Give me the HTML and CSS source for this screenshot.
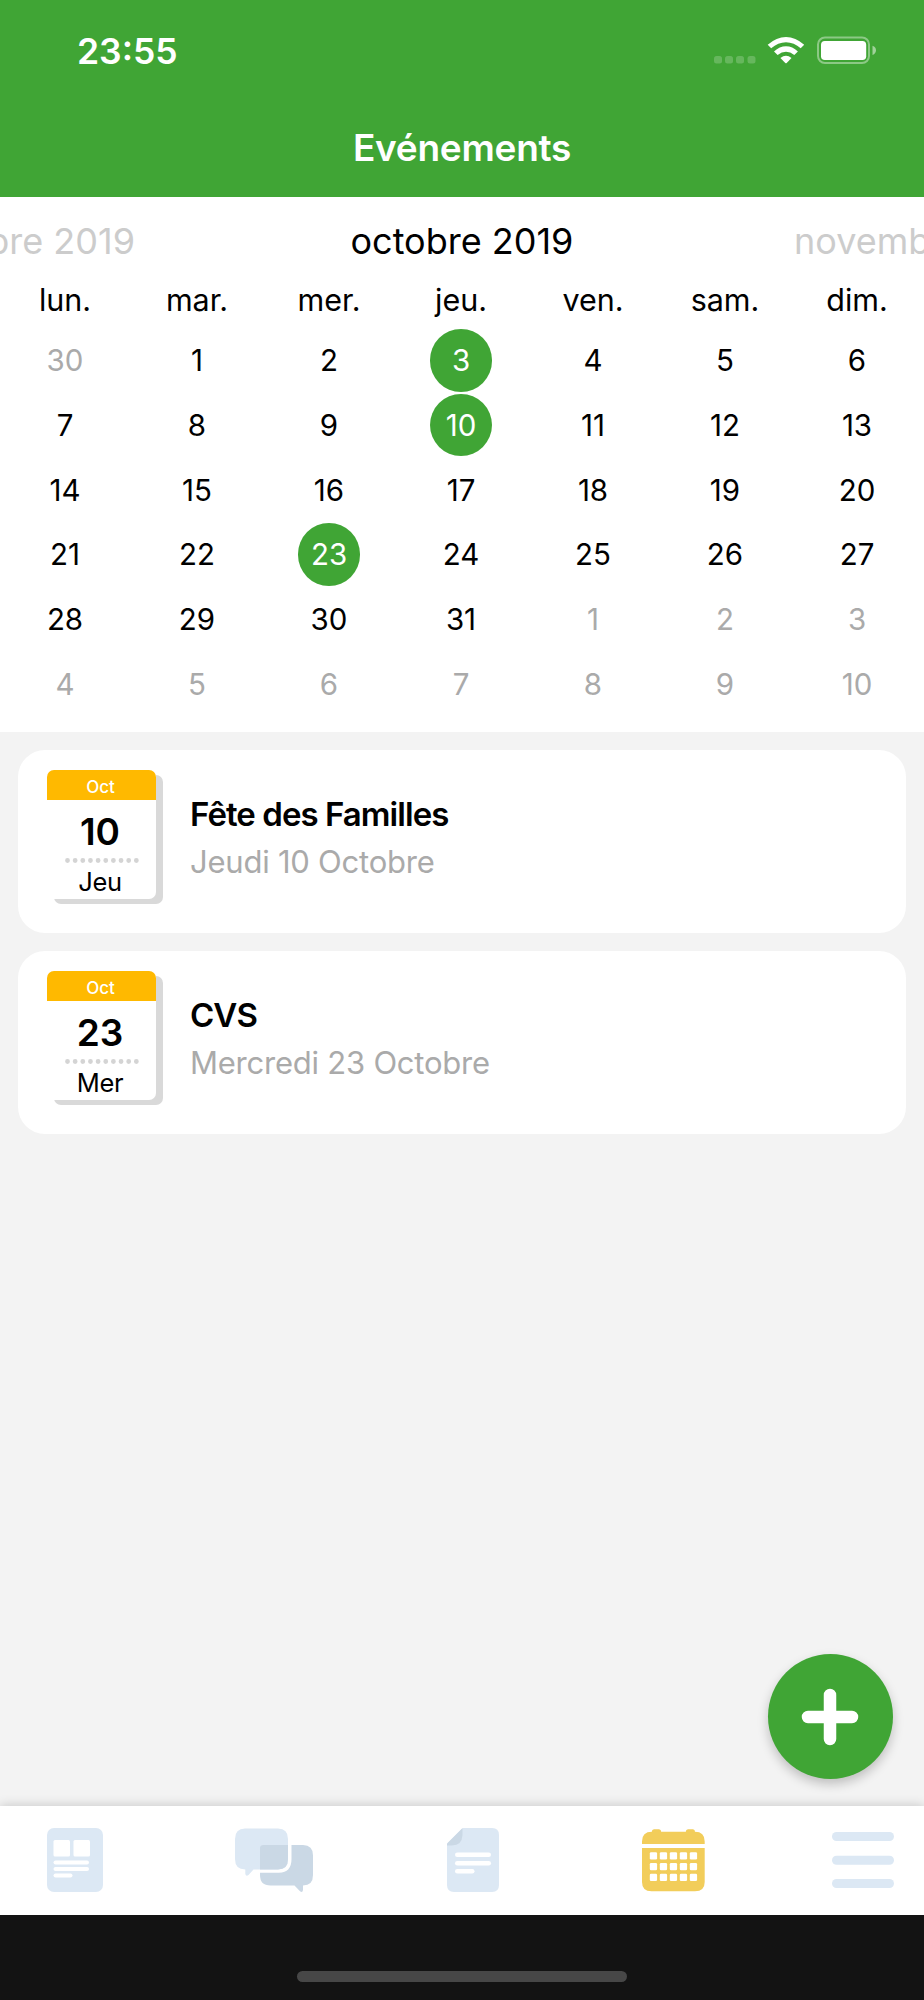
FILE: index.html
```html
<!DOCTYPE html>
<html lang="fr">
<head>
<meta charset="utf-8">
<title>Evénements</title>
<link rel="stylesheet" href="styles.css">
</head>
<body>
<div class="app">
  <header class="header">
    <div class="status">
      <span class="clock">23:55</span>
      <svg class="status-icons" width="164" height="28" viewBox="714 36 164 28">
        <g fill="#fff" fill-opacity=".2">
          <rect x="714" y="56" width="8" height="7.500" rx="2.500"/><rect x="725" y="56" width="8" height="7.500" rx="2.500"/><rect x="736" y="56" width="8" height="7.500" rx="2.500"/><rect x="747.500" y="56" width="8" height="7.500" rx="2.500"/>
        </g>
        <g fill="#fff">
          <path d="M767.700 44.700Q776.500 36.900 786 36.900T804.200 44.700L800.700 48.300Q794 42.300 786 42.300T771.200 48.300Z"/>
          <path d="M774 51.400Q779.600 46.200 786 46.200T797.900 51.400L794.300 55Q790.300 51.700 786 51.700T777.600 55Z"/>
          <path d="M780.400 58.100Q786 53.300 791.500 58.100L786.700 62.900Q786 63.500 785.300 62.900Z"/>
          <rect x="821" y="41" width="45.200" height="19" rx="3.800"/>
        </g>
        <rect x="818" y="37.500" width="51" height="25.500" rx="7" fill="none" stroke="#fff" stroke-opacity=".4" stroke-width="2"/>
        <path d="M872.500 45.700Q876 47 876 50.300T872.500 55Z" fill="#fff" fill-opacity=".5"/>
      </svg>
    </div>
    <h1 class="title">Evénements</h1>
  </header>

  <section class="calendar">
    <div class="months">
      <div class="month month-prev"><span>septembre 2019</span></div>
      <div class="month month-current"><span>octobre 2019</span></div>
      <div class="month month-next"><span>novembre 2019</span></div>
    </div>
    <div class="weekdays">
      <span>lun.</span><span>mar.</span><span>mer.</span><span>jeu.</span><span>ven.</span><span>sam.</span><span>dim.</span>
    </div>
    <div class="days">
      <span class="out">30</span><span>1</span><span>2</span><span class="event">3</span><span>4</span><span>5</span><span>6</span>
      <span>7</span><span>8</span><span>9</span><span class="event">10</span><span>11</span><span>12</span><span>13</span>
      <span>14</span><span>15</span><span>16</span><span>17</span><span>18</span><span>19</span><span>20</span>
      <span>21</span><span>22</span><span class="event">23</span><span>24</span><span>25</span><span>26</span><span>27</span>
      <span>28</span><span>29</span><span>30</span><span>31</span><span class="out">1</span><span class="out">2</span><span class="out">3</span>
      <span class="out">4</span><span class="out">5</span><span class="out">6</span><span class="out">7</span><span class="out">8</span><span class="out">9</span><span class="out">10</span>
    </div>
  </section>

  <main class="events">
    <article class="card">
      <div class="date">
        <div class="date-month">Oct</div>
        <div class="date-day">10</div>
        <svg class="dots" width="75" height="5"><line x1="2.500" y1="2.500" x2="72" y2="2.500"/></svg>
        <div class="date-name">Jeu</div>
      </div>
      <div class="info">
        <h2 class="name">Fête des Familles</h2>
        <p class="when">Jeudi 10 Octobre</p>
      </div>
    </article>
    <article class="card">
      <div class="date">
        <div class="date-month">Oct</div>
        <div class="date-day">23</div>
        <svg class="dots" width="75" height="5"><line x1="2.500" y1="2.500" x2="72" y2="2.500"/></svg>
        <div class="date-name">Mer</div>
      </div>
      <div class="info">
        <h2 class="name">CVS</h2>
        <p class="when">Mercredi 23 Octobre</p>
      </div>
    </article>
    <button class="add" aria-label="Ajouter">
      <svg width="58" height="58" viewBox="0 0 58 58"><path d="M29 7V51M7 29H51"/></svg>
    </button>
  </main>

  <nav class="tabs">
    <svg class="tab-news" width="56" height="64" viewBox="0 0 56 64">
      <rect width="56" height="64" rx="7" fill="#dce8f4"/>
      <g fill="#fff"><rect x="6.500" y="12" width="16.500" height="16.500" rx="1.500"/><rect x="26.500" y="12" width="16.500" height="16.500" rx="1.500"/><rect x="6.500" y="32.500" width="35.500" height="4" rx="2"/><rect x="6.500" y="39" width="35.500" height="4" rx="2"/><rect x="6.500" y="45.500" width="19" height="4" rx="2"/></g>
    </svg>
    <svg class="tab-chat" width="78" height="64" viewBox="0 0 78 64">
      <path d="M10 .5H43Q53 .5 53 11V31Q53 41.500 43 41.500H18.500L13.500 47Q11 48.700 10.300 46V41.500Q0 41.500 0 31V11Q0 .5 10 .5Z" fill="#dce8f4"/>
      <path d="M28.500 17H53V31Q53 41.500 43 41.500H25V20Q25 17 28.500 17Z" fill="#cad8e5"/>
      <path d="M56.500 17H68Q78 17 78 27.500V47Q78 57.500 68 57.500V62Q67.500 65 65 63.200L59.500 57.500H35.500Q25 57.500 25 47V44.700H44Q56.500 44.500 56.500 31Z" fill="#cad8e5"/>
    </svg>
    <svg class="tab-doc" width="52" height="64" viewBox="0 0 52 64">
      <path d="M16 0H45Q52 0 52 7V57Q52 64 45 64H7Q0 64 0 57V16Z" fill="#dce8f4"/>
      <path d="M0 15.500L15.500 0V7Q15 17.500 5 17.500H0Z" fill="#cad8e5"/>
      <g fill="#fff"><rect x="8" y="24.500" width="36" height="4.500" rx="2.250"/><rect x="8" y="33" width="36" height="4.500" rx="2.250"/><rect x="8" y="41" width="19.500" height="4.500" rx="2.250"/></g>
    </svg>
    <svg class="tab-calendar" width="63" height="64" viewBox="0 0 63 64">
      <path d="M0 16V13.500Q0 3.800 9.800 3.800Q9.800 1.300 12 1.300H17Q19.200 1.300 19.200 3.800H43.800Q43.800 1.300 46 1.300H51Q53 1.300 53 3.800Q62.700 3.800 62.700 13.500V16ZM0 20H62.700V54Q62.700 63.300 53 63.300H9.500Q0 63.300 0 54Z" fill="#f2cd5a"/>
      <g fill="#fff">
        <rect x="7.800" y="24.200" width="7.300" height="7.300" rx="1.300"/><rect x="17.800" y="24.200" width="7.300" height="7.300" rx="1.300"/><rect x="27.800" y="24.200" width="7.300" height="7.300" rx="1.300"/><rect x="37.800" y="24.200" width="7.300" height="7.300" rx="1.300"/><rect x="47.800" y="24.200" width="7.300" height="7.300" rx="1.300"/>
        <rect x="7.800" y="35" width="7.300" height="7.300" rx="1.300"/><rect x="17.800" y="35" width="7.300" height="7.300" rx="1.300"/><rect x="27.800" y="35" width="7.300" height="7.300" rx="1.300"/><rect x="37.800" y="35" width="7.300" height="7.300" rx="1.300"/><rect x="47.800" y="35" width="7.300" height="7.300" rx="1.300"/>
        <rect x="7.800" y="45.700" width="7.300" height="7.300" rx="1.300"/><rect x="17.800" y="45.700" width="7.300" height="7.300" rx="1.300"/><rect x="27.800" y="45.700" width="7.300" height="7.300" rx="1.300"/><rect x="37.800" y="45.700" width="7.300" height="7.300" rx="1.300"/><rect x="47.800" y="45.700" width="7.300" height="7.300" rx="1.300"/>
      </g>
    </svg>
    <svg class="tab-menu" width="62" height="64" viewBox="0 0 62 64">
      <g fill="#dce8f4"><rect y="4" width="62" height="9" rx="4.500"/><rect y="27.700" width="62" height="9" rx="4.500"/><rect y="51" width="62" height="9" rx="4.500"/></g>
    </svg>
  </nav>
  <footer class="home"><div class="indicator"></div></footer>
</div>
</body>
</html>
```
FILE: styles.css
```css
* { box-sizing: border-box; margin: 0; padding: 0; }
body { background: #f3f3f3; }
.app {
  width: 924px;
  height: 2000px;
  display: flex;
  flex-direction: column;
  overflow: hidden;
  font-family: Inter, "Liberation Sans", sans-serif;
  color: #000;
}
.header { height: 196.500px; flex: none; background: #40a535; color: #fff; }
.status {
  height: 100px;
  display: flex;
  justify-content: space-between;
  align-items: center;
  padding: 0 46px 0 77px;
}
.clock { padding-top: 3px; font-size: 35.500px; font-weight: 600; line-height: 40px; }
.status-icons { display: block; }
.title {
  font-size: 37px;
  font-weight: 600;
  line-height: 95px;
  letter-spacing: -.25px;
  text-align: center;
}

.calendar { height: 535.500px; flex: none; background: #fff; }
.months {
  display: grid;
  grid-template-columns: 135px 1fr 135px;
  height: 90px;
  line-height: 88px;
  font-size: 36px;
  white-space: nowrap;
}
.month { display: flex; overflow: hidden; }
.month-prev { justify-content: flex-end; color: #ccc; }
.month-current { justify-content: center; }
.month-next { padding-left: 5px; color: #ccc; }
.weekdays, .days {
  display: grid;
  grid-template-columns: repeat(7, 132px);
  margin-left: -1px;
  text-align: center;
}
.weekdays { font-size: 30.500px; height: 41.500px; line-height: 25px; }
.days { grid-auto-rows: 64.750px; justify-items: center; align-items: center; font-size: 29.500px; }
.days span { width: 62.600px; height: 62.600px; line-height: 62px; border-radius: 50%; }
.days .out { color: #aaa; }
.days .event { background: #40a535; color: #fff; }

.events {
  flex: 1;
  display: flex;
  flex-direction: column;
  gap: 18px;
  padding: 18px 18px 27px;
  background: #f3f3f3;
}
.card {
  display: flex;
  gap: 34px;
  height: 183px;
  padding: 20px 29px;
  border-radius: 27px;
  background: #fff;
}
.date {
  width: 109px;
  height: 129px;
  display: flex;
  flex-direction: column;
  align-items: center;
  border-radius: 7px;
  background: #fff;
  box-shadow: 7px 5px 0 #d9d9d9;
}
.date-month {
  width: 109px;
  height: 30px;
  padding-right: 2px;
  line-height: 34px;
  border-radius: 7px 7px 0 0;
  background: #ffb900;
  color: #fff;
  font-size: 17px;
  font-weight: 500;
  text-align: center;
}
.date-day { height: 58px; padding-right: 3px; line-height: 63px; font-size: 37px; font-weight: 600; }
.dots { display: block; flex: none; margin-left: 1px; }
.dots line { stroke: #d4d4d4; stroke-width: 4.800; stroke-linecap: round; stroke-dasharray: 0 7.650; }
.date-name { padding-right: 3px; line-height: 38px; font-size: 25.500px; letter-spacing: -.3px; }
.name { margin-top: 24px; font-size: 33px; font-weight: 600; line-height: 41px; letter-spacing: -.95px; }
.when { font-size: 31px; line-height: 54px; letter-spacing: -.23px; color: #aaa; }
.add {
  width: 125px;
  height: 125px;
  margin: auto 13.500px 0 auto;
  display: flex;
  align-items: center;
  justify-content: center;
  border: 0;
  border-radius: 50%;
  background: #40a535;
  box-shadow: 0 5px 11px rgba(0, 0, 0, .22);
}
.add svg { stroke: #fff; stroke-width: 12.500; stroke-linecap: round; }

.tabs {
  height: 109px;
  flex: none;
  display: flex;
  align-items: flex-start;
  padding: 22px 0 0 47px;
  background: #fff;
  box-shadow: 0 0 11px rgba(0, 0, 0, .2);
}
.tab-chat { margin-left: 132px; }
.tab-doc { margin-left: 134px; }
.tab-calendar { margin-left: 143px; }
.tab-menu { margin-left: 126.500px; }
.home {
  height: 85px;
  flex: none;
  display: flex;
  justify-content: center;
  align-items: flex-end;
  padding-bottom: 18px;
  background: #131313;
  position: relative;
}
.indicator { width: 330px; height: 11px; border-radius: 6px; background: #474747; }
```
